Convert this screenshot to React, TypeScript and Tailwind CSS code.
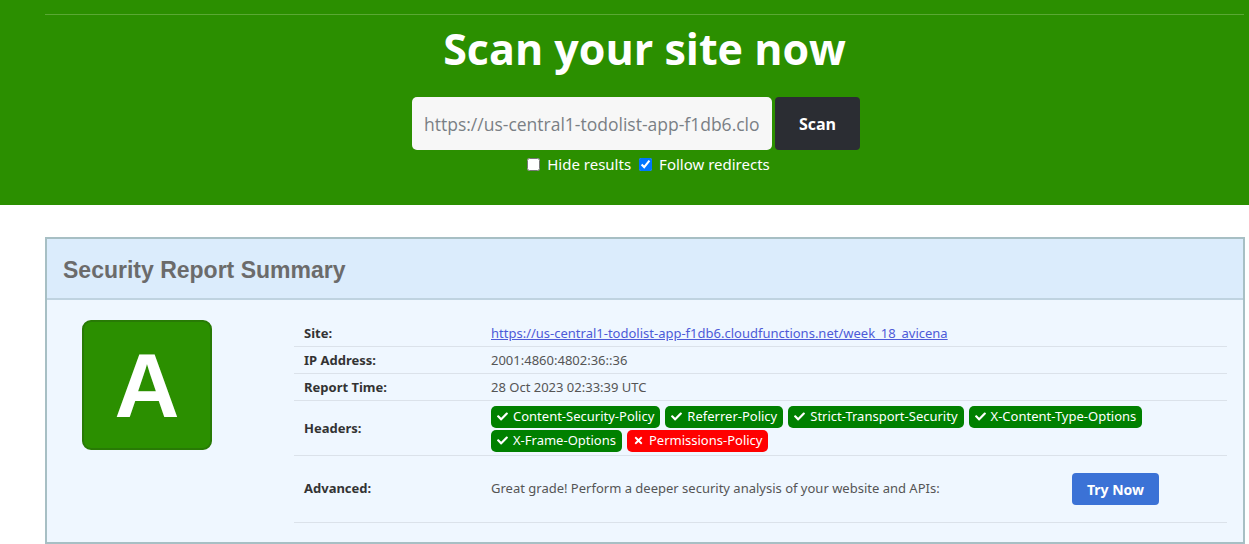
import { FaCheck, FaTimes } from 'react-icons/fa'

const headers = [
  { name: 'Content-Security-Policy', ok: true },
  { name: 'Referrer-Policy', ok: true },
  { name: 'Strict-Transport-Security', ok: true },
  { name: 'X-Content-Type-Options', ok: true },
  { name: 'X-Frame-Options', ok: true },
  { name: 'Permissions-Policy', ok: false },
]

function Badge({ name, ok }: { name: string; ok: boolean }) {
  return (
    <span
      className={`inline-flex items-center gap-[5px] h-[22px] px-[6px] rounded-[5px] text-white text-[13px] ${
        ok ? 'bg-[#008000]' : 'bg-[#ff0000]'
      }`}
    >
      {ok ? <FaCheck size={11} /> : <FaTimes size={11} />}
      {name}
    </span>
  )
}

function Row({
  label,
  children,
  className = '',
}: {
  label: string
  children: React.ReactNode
  className?: string
}) {
  return (
    <div className={`flex items-center border-t border-[#dbe2ea] ${className}`}>
      <div className="w-[197px] pl-[10px] font-bold text-[#333]">{label}</div>
      <div className="flex-1 text-[#555]">{children}</div>
    </div>
  )
}

export default function App() {
  return (
    <div className="w-[1249px] h-[544px] overflow-hidden bg-white font-['Open_Sans',sans-serif]">
      <div className="bg-[#2b8f00] h-[205px] pt-[14px]">
        <div className="ml-[45px] w-[1199px] border-t border-[#5aa834]" />
        <h1 className="text-center text-white font-bold text-[43px] leading-none mt-[12px] pl-[40px]">
          Scan your site now
        </h1>
        <div className="flex justify-center mt-[27px] gap-[3px] pl-[23px]">
          <input
            readOnly
            defaultValue="https://us-central1-todolist-app-f1db6.cloudfunctions.net/week_18_avicena"
            className="w-[360px] h-[53px] bg-[#f7f7f7] rounded-[5px] px-[12px] text-[17.5px] text-[#7a7f85] outline-none"
          />
          <button className="w-[85px] h-[53px] bg-[#2b2d33] text-white font-bold text-[16px] rounded-[4px]">
            Scan
          </button>
        </div>
        <div className="flex justify-center items-center gap-[8px] mt-[3px] text-white text-[15px] font-['Noto_Sans',sans-serif] pl-[48px]">
          <label className="flex items-center gap-[7px]">
            <input type="checkbox" className="w-[13px] h-[13px]" />
            Hide results
          </label>
          <label className="flex items-center gap-[7px]">
            <input
              type="checkbox"
              defaultChecked
              className="w-[13px] h-[13px]"
            />
            Follow redirects
          </label>
        </div>
      </div>

      <div className="ml-[45px] mt-[32px] w-[1200px] border-2 border-[#a7bfc4] bg-[#eff7ff]">
        <div className="h-[61px] bg-[#dbecfc] border-b-2 border-[#bfd3e0] flex items-center pl-[16px] pt-[3px]">
          <h2 className="font-['Liberation_Sans',sans-serif] font-bold text-[23px] text-[#6b6b6b]">
            Security Report Summary
          </h2>
        </div>
        <div className="flex pt-[20px] pb-[19px] font-['Noto_Sans',sans-serif] text-[13px]">
          <div className="w-[247px] pl-[35px]">
            <div className="w-[130px] h-[130px] rounded-[9px] bg-[#2b8f00] border-2 border-[#287a05] flex items-center justify-center">
              <span className="font-['Liberation_Sans',sans-serif] font-bold text-white text-[90px] leading-none mt-[2px]">
                A
              </span>
            </div>
          </div>
          <div className="w-[933px] border-b border-[#dbe2ea]">
            <Row label="Site:" className="h-[26px] border-t-0 pt-[1px]">
              <a className="text-[#4d5ad8] underline">
                https://us-central1-todolist-app-f1db6.cloudfunctions.net/week_18_avicena
              </a>
            </Row>
            <Row label="IP Address:" className="h-[27px] pt-[1px]">
              2001:4860:4802:36::36
            </Row>
            <Row label="Report Time:" className="h-[27px] pt-[1px]">
              28 Oct 2023 02:33:39 UTC
            </Row>
            <Row label="Headers:" className="h-[55px] pt-[1px]">
              <div className="flex flex-wrap gap-x-[5px] gap-y-[2px] w-[700px]">
                {headers.map((h) => (
                  <Badge key={h.name} name={h.name} ok={h.ok} />
                ))}
              </div>
            </Row>
            <Row label="Advanced:" className="h-[67px]">
              <div className="flex items-center">
                <span className="w-[581px]">
                  Great grade! Perform a deeper security analysis of your
                  website and APIs:
                </span>
                <button className="w-[87px] h-[32px] rounded-[4px] bg-[#3b72d6] text-white font-bold text-[14px]">
                  Try Now
                </button>
              </div>
            </Row>
          </div>
        </div>
      </div>
    </div>
  )
}
